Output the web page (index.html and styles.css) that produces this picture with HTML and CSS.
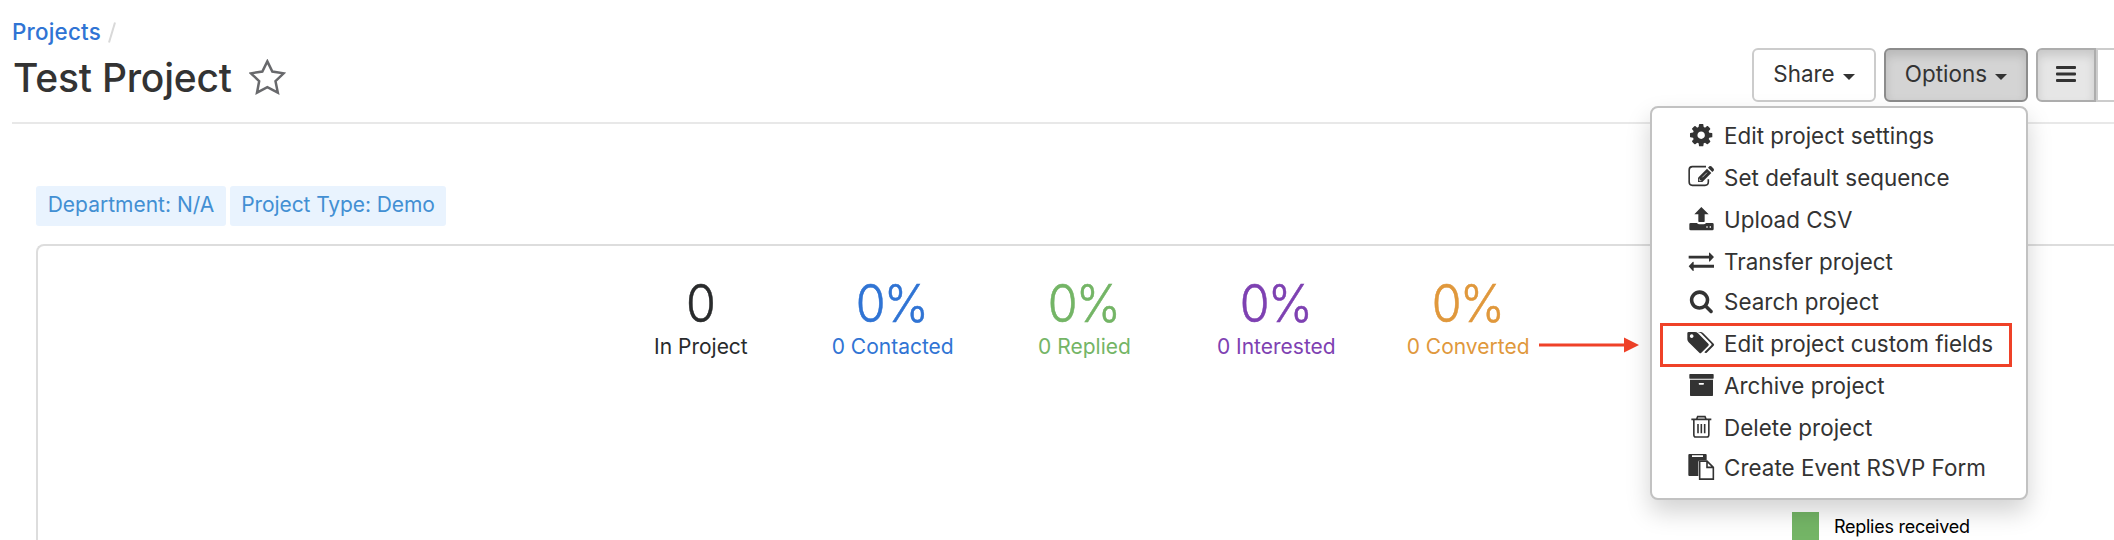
FILE: index.html
```html
<!DOCTYPE html>
<html lang="en">
<head>
<meta charset="utf-8">
<title>Test Project</title>
<link rel="stylesheet" href="styles.css">
</head>
<body>
<header class="page-header">
  <div class="heading">
    <nav class="breadcrumb"><a class="crumb">Projects</a><svg class="crumb-sep" viewBox="0 0 8 21"><path d="M1 20.500L7 .5"/></svg></nav>
    <div class="title-row">
      <h1 class="title">Test Project</h1>
      <svg class="star" viewBox="744 177 111 108"><path d="M799 184L814 214.500L848 220L823.500 243.500L830.500 278L799 261.500L768 278L774.500 243.500L750 220L784 214.500Z"/></svg>
    </div>
  </div>
  <div class="toolbar">
    <button class="btn share">Share<span class="caret"></span></button>
    <div class="dropdown">
      <button class="btn options">Options<span class="caret"></span></button>
      <ul class="menu">
        <li class="item"><svg class="icon" viewBox="51 15 84 126"><path transform="translate(54.400 36.400) scale(.0436)" d="M1152 896q0-106-75-181t-181-75-181 75-75 181 75 181 181 75 181-75 75-181zm512-109v222q0 12-8 23t-20 13l-185 28q-19 54-39 91 35 50 107 138 10 12 10 25t-9 23q-27 37-99 108t-94 71q-12 0-26-9l-138-108q-44 23-91 38-16 136-29 186-7 28-36 28h-222q-14 0-24.500-8.500t-11.500-21.500l-28-184q-49-16-90-37l-141 107q-10 9-25 9-14 0-25-11-126-114-165-168-7-10-7-23 0-12 8-23 15-21 51-66.500t54-70.500q-27-50-41-99l-183-27q-13-2-21-12.500t-8-23.500v-222q0-12 8-23t19-13l186-28q14-46 39-92-40-57-107-138-10-12-10-24 0-10 9-23 26-36 98.500-107.500t94.500-71.500q13 0 26 10l138 107q44-23 91-38 16-136 29-186 7-28 36-28h222q14 0 24.500 8.500t11.500 21.500l28 184q49 16 90 37l142-107q9-9 24-9 13 0 25 10 129 119 165 170 7 8 7 22 0 12-8 23-15 21-51 66.500t-54 70.500q26 50 41 98l183 28q13 2 21 12.500t8 23.500z"/></svg>Edit project settings</li>
        <li class="item"><svg class="icon" viewBox="51 141 84 126"><path class="line" d="M108 170H67Q57.500 170 57.500 180V216Q57.500 226 67 226H105Q115 226 115 216V208"/><path d="M84 216V203L111 176L124 189L97 216Z"/><path d="M114 173L118 169Q121 167 124 169L131 176Q133 179 131 182L127 186Z"/><path class="cut" d="M88 206L88 212L94 212M97 202L111 188"/></svg>Set default sequence</li>
        <li class="item"><svg class="icon" viewBox="51 267 84 126"><path d="M94 291L116 313H104V334Q104 336 102 336H87Q85 336 85 334V313H73Z"/><path d="M62 339H81Q83 343 89 343H100Q106 343 108 339H127Q131 339 131 343V357Q131 361 127 361H62Q58 361 58 357V343Q58 339 62 339ZM109 349V353H113V349ZM119 349V353H123V349Z"/></svg>Upload CSV</li>
        <li class="item short"><svg class="icon" viewBox="51 393 84 123"><path d="M56 437.500H117V428Q118 427 120 429L132 441L120 454Q118 456 117 454V445.500H56ZM132 464.500H71V456Q70 454 68 456L56 469L68 482Q70 484 71 482V473H132Z"/></svg>Transfer project</li>
        <li class="item short"><svg class="icon" viewBox="51 516 84 123"><path transform="translate(56.800 535.700) scale(.0415)" d="M1216 832q0-185-131.500-316.500t-316.500-131.500-316.500 131.500-131.500 316.500 131.500 316.500 316.500 131.500 316.500-131.500 131.500-316.500zm512 832q0 52-38 90t-90 38q-54 0-90-38l-343-342q-179 124-399 124-143 0-273.500-55.500t-225-150-150-225-55.500-273.500 55.500-273.500 150-225 225-150 273.500-55.500 273.500 55.500 225 150 150 225 55.500 273.500q0 220-124 399l343 343q37 37 37 90z"/></svg><span class="raised">Search project</span></li>
        <li class="item marked"><svg class="icon" viewBox="51 69 84 126"><path d="M56 96H75Q80 96 84 100L115 131Q118 134 115 137L94 158Q91 161 88 158L56 127Q52 123 52 118V100Q52 96 56 96ZM65 103A5.500 5.500 0 1 0 65.100 103Z"/><path d="M83 96H91Q96 96 100 100L131 131Q134 134 131 137L110 158Q107 161 103 157L124 136Q126 134 124 131L93 100Q89 97 83 96Z"/></svg>Edit project custom fields</li>
        <li class="item"><svg class="icon" viewBox="51 195 84 126"><path d="M60 222H129Q131 222 131 224V234Q131 236 129 236H60Q58 236 58 234V224Q58 222 60 222ZM60 239H129V286Q129 288 127 288H62Q60 288 60 286ZM88 249Q86 249 86 251.500T88 254H100Q102 254 102 251.500T100 249Z"/></svg>Archive project</li>
        <li class="item short"><svg class="icon" viewBox="51 321 84 123"><path class="line" d="M64 358H124M80 357L83 350H105L108 357M71.500 359V404Q71.500 411 77 411H111Q116.500 411 116.500 404V359M84 372V400M94 372V400M104 372V400"/></svg>Delete project</li>
        <li class="item short"><svg class="icon" viewBox="51 444 84 123"><path d="M58 462H107Q110 462 110 465V481H90Q85 481 85 486V528H58Q55 528 55 525V465Q55 462 58 462ZM66 466V471H99V466Z"/><path class="line" d="M89 483.500H111L130 502V537.500H89ZM111 484V502H130"/></svg><span class="raised">Create Event RSVP Form</span></li>
      </ul>
    </div>
    <div class="btn-group">
      <button class="btn view active"><svg class="bars" viewBox="0 0 20 18"><path d="M1 1H19Q20 1 20 2V3Q20 4 19 4H1Q0 4 0 3V2Q0 1 1 1ZM1 7.500H19Q20 7.500 20 8.500V9.500Q20 10.500 19 10.500H1Q0 10.500 0 9.500V8.500Q0 7.500 1 7.500ZM1 14H19Q20 14 20 15V16Q20 17 19 17H1Q0 17 0 16V15Q0 14 1 14Z"/></svg></button>
      <button class="btn view next" aria-label="Grid"></button>
    </div>
  </div>
</header>
<main class="content">
  <div class="tags"><span class="tag dept">Department: N/A</span><span class="tag type">Project Type: Demo</span></div>
  <section class="panel">
    <div class="stats">
      <div class="stat"><span class="num">0</span><span class="label">In Project</span></div>
      <div class="stat contacted"><span class="num">0%</span><span class="label">0 Contacted</span></div>
      <div class="stat replied"><span class="num">0%</span><span class="label">0 Replied</span></div>
      <div class="stat interested"><span class="num">0%</span><span class="label">0 Interested</span></div>
      <div class="stat converted"><span class="num">0%</span><span class="label">0 Converted</span><svg class="arrow" viewBox="0 0 100 16"><path d="M0 6.500H85V.5L100 8L85 15.500V9.500H0Z"/></svg></div>
    </div>
    <div class="legend"><span class="swatch"></span>Replies received</div>
  </section>
</main>
</body>
</html>
```
FILE: styles.css
```css
*, *::after { box-sizing: border-box; }
body {
  margin: 0;
  width: 2114px;
  height: 540px;
  overflow: hidden;
  background: #fff;
  color: #333;
  font-family: Inter, "Liberation Sans", sans-serif;
  font-size: 22.4px;
  letter-spacing: .03px;
}
.page-header {
  display: flex;
  justify-content: space-between;
  margin-left: 12px;
  height: 124px;
  border-bottom: 2px solid #e8e8e8;
}
.breadcrumb { display: flex; gap: 7px; margin-top: 18px; height: 28px; line-height: 28px; font-weight: 500; letter-spacing: .2px; }
.crumb { color: #3074d4; }
.crumb-sep { width: 8px; height: 21px; margin-top: 4px; fill: none; stroke: #d9d9d9; stroke-width: 2; }
.title-row { display: flex; align-items: center; gap: 17px; height: 64px; padding-left: 1px; }
.title { margin: 0; font-size: 39px; font-weight: 500; letter-spacing: -.22px; line-height: 64px; }
.star { width: 37px; height: 36px; margin-top: -2px; fill: none; stroke: #68696c; stroke-width: 7.5; }
.toolbar { display: flex; gap: 8px; margin-top: 48px; height: 54px; margin-right: -10px; }
.btn {
  display: flex;
  align-items: center;
  justify-content: center;
  gap: 8px;
  height: 54px;
  padding: 0 0 3px;
  border: 2px solid #ccc;
  border-radius: 6px;
  background: #fff;
  color: #333;
  font: inherit;
  letter-spacing: inherit;
}
.share { width: 124px; }
.caret { margin-top: 6px; border: 6px solid transparent; border-top-color: #333; border-bottom: 0; }
.dropdown { position: relative; }
.options { width: 144px; border-color: #8c8c8c; background: #d4d4d4; box-shadow: inset 0 6px 10px rgba(0,0,0,.125); }
.btn-group { display: flex; }
.view { width: 60px; }
.active { padding-bottom: 0; border-color: #adadad; border-radius: 6px 0 0 6px; background: #e6e6e6; box-shadow: inset 0 6px 10px rgba(0,0,0,.125); }
.next { width: 28px; border-left-width: 2px; border-right: 0; border-radius: 0; }
.bars { width: 20px; height: 18px; margin-top: -2px; fill: #333; }
.menu {
  position: absolute;
  z-index: 2;
  top: 58px;
  right: 0;
  width: 378px;
  height: 394px;
  margin: 0;
  padding: 7px 8px 0;
  list-style: none;
  border: 2px solid #c2c2c2;
  border-radius: 8px;
  background: #fff;
  box-shadow: 0 12px 24px rgba(0,0,0,.175);
}
.item { position: relative; display: flex; align-items: center; gap: 9px; height: 42px; padding-left: 27px; line-height: 42px; white-space: nowrap; }
.short { height: 41px; }
.raised { padding-bottom: 1px; }
.icon { flex: none; width: 28px; height: 100%; fill: #333; fill-rule: evenodd; }
.line { fill: none; stroke: #333; stroke-width: 4.8; }
.cut { fill: none; stroke: #fff; stroke-width: 2; }
.marked::after { content: ""; position: absolute; left: 0; top: 0; width: 352px; height: 44px; border: 3px solid #ef4128; }
.content { padding: 62px 0 0 36px; }
.tags { display: flex; gap: 4px; height: 40px; }
.tag { display: flex; align-items: center; justify-content: center; height: 40px; padding-bottom: 3px; border-radius: 3px; background: #e9f3fe; color: #428fd3; font-size: 21px; letter-spacing: 0; }
.dept { width: 190px; }
.type { width: 216px; letter-spacing: -.1px; }
.panel { margin-top: 18px; height: 320px; border: 2px solid #ddd; border-right: 0; border-radius: 8px 0 0 0; }
.stats { display: flex; margin-left: 567px; padding-top: 26px; height: 264px; }
.stat { position: relative; display: flex; flex-direction: column; align-items: center; width: 191.800px; color: #292b2c; }
.num { height: 62px; margin-right: 2px; line-height: 64px; font-size: 52px; font-weight: 300; letter-spacing: -2px; transform: scaleX(.93); -webkit-text-stroke: .5px currentColor; }
.label { height: 26px; line-height: 26px; font-size: 21px; letter-spacing: 0; }
.contacted { color: #3074d4; }
.replied { color: #74b566; }
.interested { color: #7e41b2; }
.converted { color: #e0983c; }
.arrow { position: absolute; left: 167px; top: 65px; width: 100px; height: 16px; fill: #ef4128; }
.legend { display: flex; align-items: center; gap: 15px; margin: 2px 0 0 1754px; height: 28px; color: #000; font-size: 18px; letter-spacing: -.27px; }
.swatch { width: 27px; height: 28px; background: #74b566; }
```
